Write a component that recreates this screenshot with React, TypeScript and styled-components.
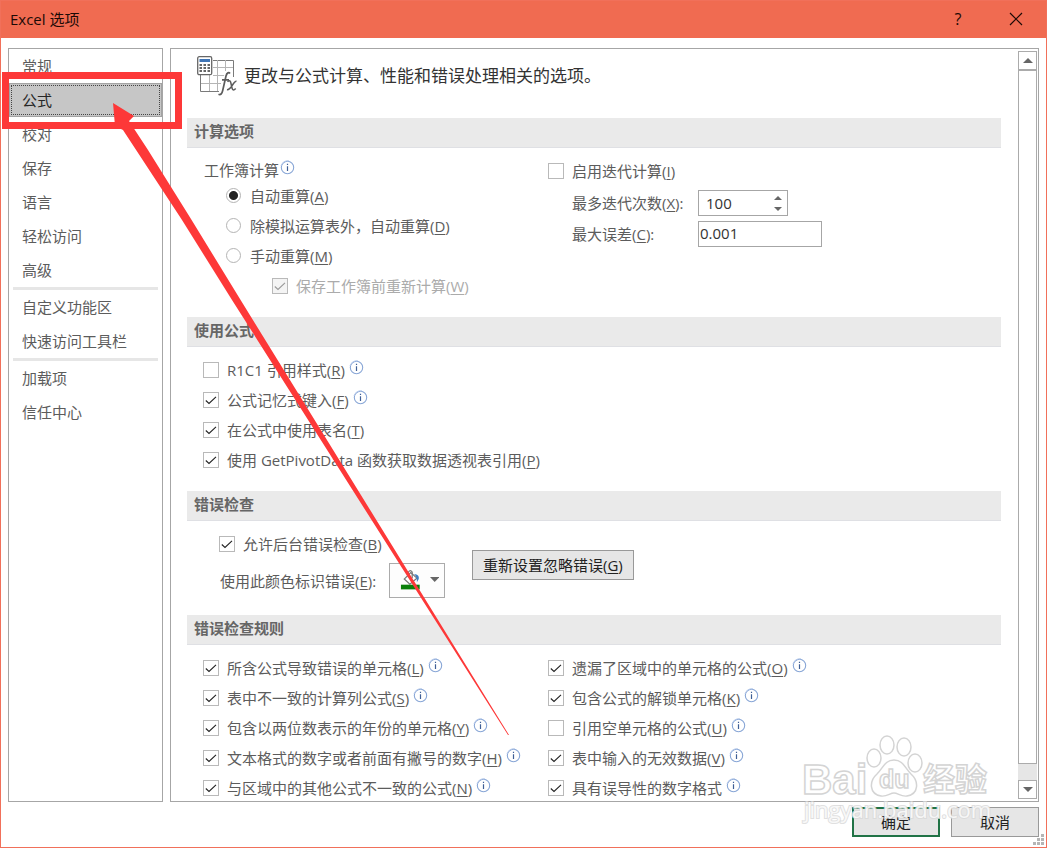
import React, { useId, useState } from 'react';
import styled, { createGlobalStyle, css } from 'styled-components';

const GlobalStyle = createGlobalStyle`
  *, *::before, *::after { box-sizing: border-box; }
  body { margin: 0; background: #fff; }
  body, button, input {
    font-family: 'Open Sans', 'Noto Sans CJK SC', sans-serif;
    font-size: 15px;
    line-height: 22px;
  }
  u { text-underline-offset: 2px; text-decoration-thickness: 1px; }
`;

const Dialog = styled.div`
  position: relative;
  display: flex;
  flex-direction: column;
  height: 100vh;
  border: 1px solid #f1705a;
  background: #fff;
  color: #5c5c5c;
  overflow: hidden;
`;

const TitleBar = styled.header`
  display: flex;
  align-items: center;
  flex: none;
  height: 37px;
  padding: 0 1px 2px 9px;
  background: #f06b51;
  color: #1c0a06;
`;

const Title = styled.h1`
  flex: 1;
  margin: 0;
  font-size: 15px;
  font-weight: 400;
`;

const WindowButton = styled.button`
  display: flex;
  align-items: center;
  justify-content: center;
  width: 58px;
  height: 35px;
  padding: 0;
  border: 0;
  background: none;
  color: #1c0a06;
  font-size: 16px;
`;

const Body = styled.div`
  display: flex;
  flex: 1;
  gap: 7px;
  min-height: 0;
  padding: 10px 7px 0;
`;

const Sidebar = styled.nav`
  flex: none;
  width: 155px;
  border: 1px solid #a6a6a6;
`;

const NavItem = styled.button<{ $active?: boolean }>`
  display: block;
  width: 100%;
  height: 34px;
  padding: 0 12px 1px;
  border: 1px solid transparent;
  background: none;
  color: #5c5c5c;
  text-align: left;
  ${(p) =>
    p.$active &&
    css`
      border-color: #a3a3a3;
      background: #c6c6c6;
      color: #262626;
      outline: 1px dotted #444;
      outline-offset: -3px;
    `}
`;

const NavDivider = styled.hr`
  height: 3px;
  margin: 0 4px;
  border: 0;
  background: #e6e6e6;
`;

const Panel = styled.main`
  display: flex;
  flex: 1;
  min-width: 0;
  padding: 2px 1px 2px 16px;
  border: 1px solid #a6a6a6;
  overflow: hidden;
`;

const Content = styled.div`
  flex: 1;
  min-width: 0;
  height: calc(100% + 2px);
  margin-right: 17px;
  overflow: hidden;
`;

const Intro = styled.div`
  display: flex;
  align-items: center;
  gap: 6px;
  height: 67px;
  padding: 0 0 17px 10px;
  color: #333;
  font-size: 17px;
`;

const SectionTitle = styled.h2`
  height: 30px;
  margin: 0;
  padding: 0 7px;
  border-bottom: 1px solid #dfe0e4;
  background: #eaeaea;
  color: #666;
  font-size: 15px;
  font-weight: 700;
  line-height: 27px;
`;

const SectionBody = styled.div`
  padding: 8px 0 16px 16px;
`;

const TwoColumns = styled(SectionBody)`
  display: grid;
  grid-template-columns: 345fr 453fr;
`;

const ErrorBody = styled(SectionBody)`
  display: flex;
  gap: 27px;
  padding-bottom: 17px;
`;

const Choice = styled.div<{ $indent?: number; $disabled?: boolean }>`
  display: flex;
  align-items: center;
  height: 30px;
  padding-left: ${(p) => p.$indent ?? 0}px;
  white-space: nowrap;
  color: ${(p) => (p.$disabled ? '#ababab' : 'inherit')};
`;

const ChoiceLabel = styled.label`
  display: flex;
  align-items: center;
  gap: 8px;
`;

const tick = (color: string) =>
  `url("data:image/svg+xml,%3Csvg xmlns='http://www.w3.org/2000/svg' viewBox='0 0 14 14'%3E%3Cpath d='M1.800 7.500 5 10.500 12 3.800' fill='none' stroke='%23${color}' stroke-width='1.1'/%3E%3C/svg%3E")`;

const Tickbox = styled.input`
  appearance: none;
  flex: none;
  width: 16px;
  height: 16px;
  margin: 0;
  border: 1px solid #b9b9b9;
  background-color: #fff;
  &:checked { background-image: ${tick('222222')}; }
  &:disabled { background-color: #f4f4f4; }
  &:disabled:checked { background-image: ${tick('999999')}; }
`;

const Radio = styled.input`
  appearance: none;
  flex: none;
  width: 15px;
  height: 15px;
  margin: 0 1px 2px 0;
  border: 1px solid #b4b4b4;
  border-radius: 50%;
  background: #fff;
  &:checked { background: radial-gradient(circle, #222 0 4px, #fff 5px); }
`;

const RadioGroup = styled.fieldset`
  min-width: 0;
  margin: 0;
  padding: 3px 0 0;
  border: 0;
`;

const GroupLegend = styled.legend`
  display: flex;
  align-items: center;
  float: left;
  width: 100%;
  height: 22px;
  padding: 0 0 0 1px;
`;

const GroupOptions = styled.div`
  clear: both;
`;

const InfoMark = styled.svg<{ $tight?: boolean }>`
  flex: none;
  width: 15px;
  height: 15px;
  margin-left: ${(p) => (p.$tight ? 1 : 4)}px;
  margin-bottom: 6px;
`;

const FieldGrid = styled.div`
  display: grid;
  grid-template-columns: 126px auto;
  justify-content: start;
  align-items: center;
  gap: 5px 0;
  padding: 4px 0 0 24px;
`;

const Spinner = styled.div`
  display: flex;
  width: 90px;
  height: 26px;
  border: 1px solid #a6a6a6;
`;

const SpinnerInput = styled.input`
  appearance: textfield;
  flex: 1;
  min-width: 0;
  padding: 0 0 0 7px;
  border: 0;
  background: none;
  color: #333;
  &::-webkit-inner-spin-button { appearance: none; margin: 0; }
`;

const SpinnerButtons = styled.div`
  display: flex;
  flex-direction: column;
  width: 19px;
  padding: 1px 0;
`;

const SpinnerButton = styled.button`
  display: flex;
  flex: 1;
  align-items: center;
  justify-content: center;
  padding: 0;
  border: 0;
  background: none;
`;

const TextField = styled.input`
  width: 124px;
  height: 26px;
  padding: 0 1px 2px;
  border: 1px solid #a6a6a6;
  color: #333;
`;

const ErrorFields = styled.div`
  display: flex;
  flex-direction: column;
  gap: 4px;
`;

const ColorRow = styled.div`
  display: flex;
  align-items: center;
  justify-content: space-between;
  width: 242px;
  padding-left: 17px;
  white-space: nowrap;
`;

const ColorButton = styled.button`
  display: flex;
  align-items: center;
  gap: 9px;
  width: 56px;
  height: 35px;
  padding: 0 5px 2px 10px;
  border: 1px solid #ababab;
  background: #fdfdfd;
`;

const PushButton = styled.button<{ $primary?: boolean }>`
  min-width: 88px;
  height: 30px;
  padding: 0 10px;
  border: ${(p) => (p.$primary ? '2px solid #217346' : '1px solid #999')};
  background: #e6e6e6;
  color: #222;
  white-space: nowrap;
`;

const ResetSlot = styled.div`
  padding-top: 21px;
`;

const Scrollbar = styled.div`
  display: flex;
  flex-direction: column;
  flex: none;
  width: 19px;
  background: #e6e6e6;
`;

const ScrollButton = styled.button`
  display: flex;
  align-items: center;
  justify-content: center;
  flex: none;
  height: 19px;
  padding: 0;
  border: 1px solid #ababab;
  background: #fff;
`;

const ScrollThumb = styled.div`
  flex: 694;
  border: 1px solid #ababab;
  background: #fff;
`;

const ScrollTrack = styled.div`
  flex: 16;
`;

const Footer = styled.footer`
  display: flex;
  flex: none;
  justify-content: flex-end;
  gap: 11px;
  padding: 5px 7px 10px;
`;

const ResizeGrip = styled.svg`
  position: absolute;
  right: 2px;
  bottom: 2px;
`;

const Annotation = styled.svg`
  position: absolute;
  left: 0;
  top: 0;
  pointer-events: none;
`;

const Watermark = styled.svg`
  position: absolute;
  right: 54px;
  bottom: 19px;
  pointer-events: none;
`;

const Triangle = ({ up, w = 8, h = 4 }: { up?: boolean; w?: number; h?: number }) => (
  <svg width={w} height={h} viewBox="0 0 8 4" preserveAspectRatio="none" aria-hidden="true">
    <path d={up ? 'M0 4 4 0 8 4Z' : 'M0 0 4 4 8 0Z'} fill="#666" />
  </svg>
);

const Info = ({ tight }: { tight?: boolean }) => (
  <InfoMark $tight={tight} viewBox="0 0 15 15" aria-hidden="true">
    <circle cx="7.5" cy="7.5" r="6.2" fill="#fff" stroke="#88a6d6" strokeWidth="1.1" />
    <path d="M1 6A7 7 0 0 1 9 .8" fill="none" stroke="#b9cbea" />
    <path d="M7.5 6.300V11M7.500 3.800V5" stroke="#3f5f96" strokeWidth="1.2" />
  </InfoMark>
);

const FormulaIcon = () => (
  <svg width="41" height="42" viewBox="0 0 41 42" aria-hidden="true">
    <g fill="none" stroke="#7a7a7a">
      <path d="M16 5.5H36.5V22M3.5 20V36.5H22" />
      <path d="M16 12.5H36M16 20.5H30M4 28.5H24M12.5 20V36M20.5 5V36M28.5 5V16" stroke="#b5b5b5" />
    </g>
    <rect x="0.7" y="1.7" width="14" height="18" rx="1.5" fill="#fff" stroke="#666" strokeWidth="1.3" />
    <rect x="2.5" y="4" width="10.5" height="3" fill="#3f74b5" />
    <path d="M2.5 10H13M2.5 13H13M2.5 16H13" stroke="#666" strokeWidth="2" strokeDasharray="2.5 1.5" />
    <path
      d="M33 18.5C32 17 29.8 17.5 29 21L25.7 35.5C25 38.8 23.5 40.3 21.5 39.2M25 24.8H32"
      fill="none"
      stroke="#fff"
      strokeWidth="4"
    />
    <path
      d="M33 18.5C32 17 29.8 17.5 29 21L25.7 35.5C25 38.8 23.5 40.3 21.5 39.2M25 24.8H32"
      fill="none"
      stroke="#5c5c5c"
      strokeWidth="1.7"
    />
    <path
      d="M30.5 26.8C32.5 24.6 33.5 26 34 28.5L35 33C35.6 35.6 37 35.3 38.7 33.4M39.5 26.2C36.5 25.6 34 35.6 30 34.6"
      fill="none"
      stroke="#5c5c5c"
      strokeWidth="1.5"
    />
  </svg>
);

const BucketIcon = () => (
  <svg width="22" height="22" viewBox="0 0 22 22" aria-hidden="true">
    <path d="M4.500 10 11.500 3 18 9 10.500 15.500Z" fill="#fff" stroke="#777" strokeWidth="1.3" />
    <path d="M9 8V2.500Q11-.5 13 2.500V9" fill="none" stroke="#777" strokeWidth="1.3" />
    <path d="M15 4.500Q21 5 20 10L18 13.500Q18.500 8 15 4.500Z" fill="#3f7fc1" />
    <rect x="1" y="16" width="20" height="5" fill="#0a800a" />
  </svg>
);

type Option = { text: string; hotkey?: string; checked?: boolean; info?: boolean };

function CheckOption({
  text,
  hotkey,
  checked,
  info,
  indent,
  disabled,
}: Option & { indent?: number; disabled?: boolean }) {
  const id = useId();
  return (
    <Choice $indent={indent} $disabled={disabled}>
      <ChoiceLabel htmlFor={id}>
        <Tickbox id={id} type="checkbox" defaultChecked={checked} disabled={disabled} />
        <span>
          {text}
          {hotkey && (
            <>
              (<u>{hotkey}</u>)
            </>
          )}
        </span>
      </ChoiceLabel>
      {info && <Info />}
    </Choice>
  );
}

const NAV_GROUPS = [
  ['常规', '公式', '校对', '保存', '语言', '轻松访问', '高级'],
  ['自定义功能区', '快速访问工具栏'],
  ['加载项', '信任中心'],
];

const CALC_MODES = [
  { text: '自动重算', hotkey: 'A' },
  { text: '除模拟运算表外，自动重算', hotkey: 'D' },
  { text: '手动重算', hotkey: 'M' },
];

const FORMULA_OPTIONS: Option[] = [
  { text: 'R1C1 引用样式', hotkey: 'R', info: true },
  { text: '公式记忆式键入', hotkey: 'F', checked: true, info: true },
  { text: '在公式中使用表名', hotkey: 'T', checked: true },
  { text: '使用 GetPivotData 函数获取数据透视表引用', hotkey: 'P', checked: true },
];

const RULES_LEFT: Option[] = [
  { text: '所含公式导致错误的单元格', hotkey: 'L', checked: true, info: true },
  { text: '表中不一致的计算列公式', hotkey: 'S', checked: true, info: true },
  { text: '包含以两位数表示的年份的单元格', hotkey: 'Y', checked: true, info: true },
  { text: '文本格式的数字或者前面有撇号的数字', hotkey: 'H', checked: true, info: true },
  { text: '与区域中的其他公式不一致的公式', hotkey: 'N', checked: true, info: true },
];

const RULES_RIGHT: Option[] = [
  { text: '遗漏了区域中的单元格的公式', hotkey: 'O', checked: true, info: true },
  { text: '包含公式的解锁单元格', hotkey: 'K', checked: true, info: true },
  { text: '引用空单元格的公式', hotkey: 'U', info: true },
  { text: '表中输入的无效数据', hotkey: 'V', checked: true, info: true },
  { text: '具有误导性的数字格式', checked: true, info: true },
];

export default function App() {
  const [page, setPage] = useState('公式');
  const [iterations, setIterations] = useState(100);

  return (
    <>
      <GlobalStyle />
      <Dialog role="dialog" aria-labelledby="dialog-title">
        <TitleBar>
          <Title id="dialog-title">Excel 选项</Title>
          <WindowButton aria-label="帮助">?</WindowButton>
          <WindowButton aria-label="关闭">
            <svg width="14" height="14" viewBox="0 0 14 14" aria-hidden="true">
              <path d="M1 1 13 13M13 1 1 13" stroke="#1c0a06" strokeWidth="1.2" />
            </svg>
          </WindowButton>
        </TitleBar>

        <Body>
          <Sidebar>
            {NAV_GROUPS.map((group, i) => (
              <React.Fragment key={group[0]}>
                {i > 0 && <NavDivider />}
                {group.map((name) => (
                  <NavItem key={name} $active={name === page} onClick={() => setPage(name)}>
                    {name}
                  </NavItem>
                ))}
              </React.Fragment>
            ))}
          </Sidebar>

          <Panel>
            <Content>
              <Intro>
                <FormulaIcon />
                <span>更改与公式计算、性能和错误处理相关的选项。</span>
              </Intro>

              <SectionTitle>计算选项</SectionTitle>
              <TwoColumns>
                <RadioGroup>
                  <GroupLegend>
                    工作簿计算
                    <Info tight />
                  </GroupLegend>
                  <GroupOptions>
                    {CALC_MODES.map((mode, i) => (
                      <Choice key={mode.hotkey} $indent={23}>
                        <ChoiceLabel>
                          <Radio type="radio" name="calc-mode" defaultChecked={i === 0} />
                          <span>
                            {mode.text}(<u>{mode.hotkey}</u>)
                          </span>
                        </ChoiceLabel>
                      </Choice>
                    ))}
                    <CheckOption text="保存工作簿前重新计算" hotkey="W" checked disabled indent={69} />
                  </GroupOptions>
                </RadioGroup>
                <div>
                  <CheckOption text="启用迭代计算" hotkey="I" />
                  <FieldGrid>
                    <label htmlFor="iterations">
                      最多迭代次数(<u>X</u>):
                    </label>
                    <Spinner>
                      <SpinnerInput
                        id="iterations"
                        type="number"
                        value={iterations}
                        onChange={(e) => setIterations(Number(e.target.value))}
                      />
                      <SpinnerButtons>
                        <SpinnerButton aria-label="增加" onClick={() => setIterations((n) => n + 1)}>
                          <Triangle up />
                        </SpinnerButton>
                        <SpinnerButton aria-label="减少" onClick={() => setIterations((n) => n - 1)}>
                          <Triangle />
                        </SpinnerButton>
                      </SpinnerButtons>
                    </Spinner>
                    <label htmlFor="max-change">
                      最大误差(<u>C</u>):
                    </label>
                    <TextField id="max-change" type="text" defaultValue="0.001" />
                  </FieldGrid>
                </div>
              </TwoColumns>

              <SectionTitle>使用公式</SectionTitle>
              <SectionBody>
                {FORMULA_OPTIONS.map((option) => (
                  <CheckOption key={option.text} {...option} />
                ))}
              </SectionBody>

              <SectionTitle>错误检查</SectionTitle>
              <ErrorBody>
                <ErrorFields>
                  <CheckOption text="允许后台错误检查" hotkey="B" checked indent={16} />
                  <ColorRow>
                    <label htmlFor="error-color">
                      使用此颜色标识错误(<u>E</u>):
                    </label>
                    <ColorButton id="error-color" aria-haspopup="listbox">
                      <BucketIcon />
                      <Triangle w={10} h={5} />
                    </ColorButton>
                  </ColorRow>
                </ErrorFields>
                <ResetSlot>
                  <PushButton>
                    重新设置忽略错误(<u>G</u>)
                  </PushButton>
                </ResetSlot>
              </ErrorBody>

              <SectionTitle>错误检查规则</SectionTitle>
              <TwoColumns>
                <div>
                  {RULES_LEFT.map((rule) => (
                    <CheckOption key={rule.text} {...rule} />
                  ))}
                </div>
                <div>
                  {RULES_RIGHT.map((rule) => (
                    <CheckOption key={rule.text} {...rule} />
                  ))}
                </div>
              </TwoColumns>
            </Content>

            <Scrollbar>
              <ScrollButton aria-label="向上滚动">
                <Triangle up w={10} h={5} />
              </ScrollButton>
              <ScrollThumb />
              <ScrollTrack />
              <ScrollButton aria-label="向下滚动">
                <Triangle w={10} h={5} />
              </ScrollButton>
            </Scrollbar>
          </Panel>
        </Body>

        <Footer>
          <PushButton $primary>确定</PushButton>
          <PushButton>取消</PushButton>
        </Footer>

        <ResizeGrip width="11" height="11" viewBox="0 0 11 11" aria-hidden="true">
          <path d="M8 0h3v3H8zM4 4h3v3H4zM8 4h3v3H8zM0 8h3v3H0zM4 8h3v3H4zM8 8h3v3H8z" fill="#b5b5b5" />
        </ResizeGrip>

        <Watermark width="192" height="96" viewBox="0 0 192 96" aria-hidden="true">
          <g
            fill="#fff"
            fillOpacity="0.8"
            stroke="#d4d4d4"
            strokeWidth="1.5"
            fontFamily="'Liberation Sans', 'Noto Sans CJK SC', sans-serif"
            fontWeight="700"
          >
            <text x="2" y="62" fontSize="42">Bai</text>
            <ellipse cx="74" cy="26" rx="7" ry="9" />
            <ellipse cx="87" cy="13" rx="7" ry="9" />
            <ellipse cx="104" cy="15" rx="7" ry="9" />
            <ellipse cx="115" cy="31" rx="7" ry="9" />
            <path d="M94 28C103 28 105 36 111 42C119 49 119 62 107 64C101 65 98 61 94 61C90 61 87 65 81 64C69 62 69 49 77 42C83 36 85 28 94 28Z" />
            <text x="79" y="56" fontSize="25">du</text>
            <text x="123" y="59" fontSize="32">经验</text>
          </g>
          <text
            x="4"
            y="86"
            fill="#fff"
            fillOpacity="0.8"
            stroke="#d8d8d8"
            strokeOpacity="0.8"
            strokeWidth="2"
            paintOrder="stroke"
            fontFamily="'Open Sans', sans-serif"
            fontSize="22"
          >
            jingyan.baidu.com
          </text>
        </Watermark>

        <Annotation width="520" height="740" viewBox="1 1 520 740" aria-hidden="true">
          <rect x="5.5" y="75.5" width="173" height="50" fill="none" stroke="#fd3838" strokeWidth="7" />
          <path d="M113 103 134 116 129 121 148 150 191 219 240 299 509 735 508 735 232 300 182 220 123 130 115 126Z" fill="#fd3838" />
        </Annotation>
      </Dialog>
    </>
  );
}
